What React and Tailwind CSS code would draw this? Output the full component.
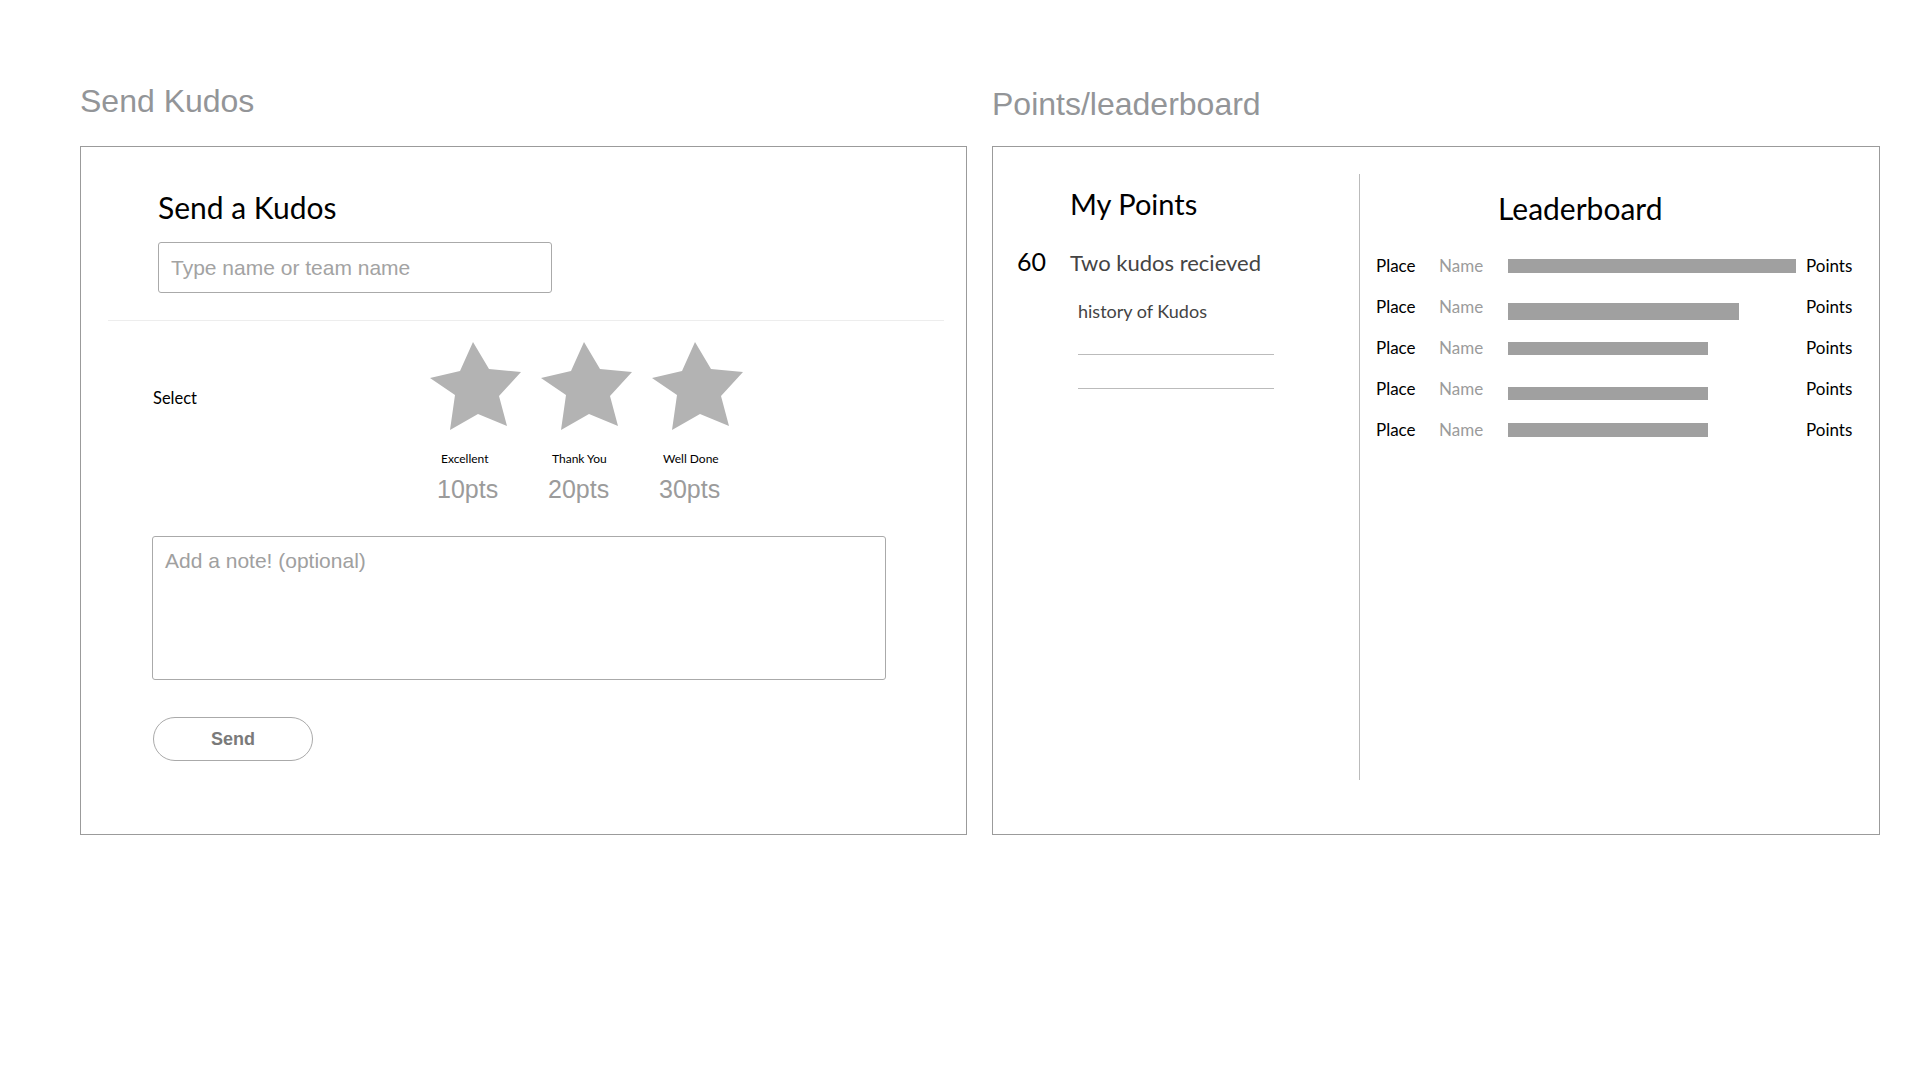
import React from 'react';

const sans = "font-['Liberation_Sans',Arial,sans-serif]";
const lato = "font-['Lato','Open_Sans',sans-serif]";

const kudos = [
  { label: 'Excellent', pts: '10pts' },
  { label: 'Thank You', pts: '20pts' },
  { label: 'Well Done', pts: '30pts' },
];

// width in px, plus a little vertical nudge the mockup has on some bars
const rows = [
  { w: 288, cls: 'h-[14px]' },
  { w: 231, cls: 'h-[17px] mt-[10px]' },
  { w: 200, cls: 'h-[13px] mt-[2px]' },
  { w: 200, cls: 'h-[13px] mt-[10px]' },
  { w: 200, cls: 'h-[14px]' },
];

function Star() {
  return (
    <svg width="91" height="88" viewBox="0 0 91 88">
      <polygon
        points="43,0 59,27 91,30 69,54 77,84 48,72 20,88 25,53 0,36 30,29"
        fill="#b3b3b3"
      />
    </svg>
  );
}

function SendKudos() {
  return (
    <div className="w-[887px] pt-[81px]">
      <h1 className={`${sans} h-[40px] leading-[40px] text-[32px] text-[#939598]`}>Send Kudos</h1>
      <div className="mt-[25px] h-[689px] border border-[#9b9b9b] flex flex-col">
        <div className="pl-[77px] pt-[42px]">
          <h2 className={`${lato} text-[30px] leading-[36px] text-black`}>Send a Kudos</h2>
          <input
            type="text"
            placeholder="Type name or team name"
            className={`${sans} mt-[17px] w-[394px] h-[51px] border border-[#aaaaaa] rounded-[3px] px-[12px] text-[21px] text-gray-700 placeholder:text-[#a3a3a3] outline-none`}
          />
        </div>

        <div className="mt-[27px] ml-[27px] mr-[22px] h-px bg-[#ededed]" />

        <div className="mt-[21px] pl-[72px] flex">
          <div className={`${lato} w-[277px] mt-[46px] text-[16.5px] leading-[20px] text-black`}>Select</div>
          {kudos.map((k) => (
            <div key={k.label} className="w-[111px] flex flex-col items-start">
              <Star />
              <span className={`${lato} mt-[21px] pl-[11px] text-[12px] leading-[16px] text-black`}>{k.label}</span>
              <span className={`${sans} mt-[8px] pl-[7px] text-[25px] leading-[28px] text-[#9b9b9b]`}>{k.pts}</span>
            </div>
          ))}
        </div>

        <textarea
          placeholder="Add a note! (optional)"
          className={`${sans} mt-[33px] ml-[71px] w-[734px] h-[144px] resize-none border border-[#aaaaaa] rounded-[3px] px-[12px] pt-[12px] text-[21px] leading-[24px] text-gray-700 placeholder:text-[#a0a0a0] outline-none`}
        />

        <button
          className={`${sans} mt-[37px] ml-[72px] w-[160px] h-[44px] rounded-full border border-[#aaaaaa] text-[18px] font-bold text-[#7a7a7a]`}
        >
          Send
        </button>
      </div>
    </div>
  );
}

function Leaderboard() {
  return (
    <div className="w-[888px] pt-[84px]">
      <h1 className={`${sans} h-[40px] leading-[40px] text-[32px] text-[#939598]`}>Points/leaderboard</h1>
      <div className="mt-[22px] h-[689px] border border-[#9b9b9b] flex">
        <div className="w-[366px] pl-[24px] pt-[39px] flex flex-col">
          <h2 className={`${lato} ml-[53px] text-[29px] leading-[36px] text-black`}>My Points</h2>
          <div className={`${lato} mt-[24px] h-[30px] flex items-baseline`}>
            <span className="w-[53px] text-[25px] leading-[30px] text-black">60</span>
            <span className="text-[22px] leading-[30px] text-[#444444]">Two kudos recieved</span>
          </div>
          <div className={`${lato} mt-[24px] ml-[61px] text-[18px] leading-[22px] text-[#444444]`}>history of Kudos</div>
          <div className="mt-[32px] ml-[61px] w-[196px] h-px bg-[#bbbbbb]" />
          <div className="mt-[33px] ml-[61px] w-[196px] h-px bg-[#bbbbbb]" />
        </div>

        <div className="mt-[27px] w-px h-[606px] bg-[#bbbbbb]" />

        <div className="flex-1 pl-[16px] pt-[43px] flex flex-col">
          <h2 className={`${lato} ml-[122px] text-[30px] leading-[36px] text-black`}>Leaderboard</h2>
          <div className="mt-[19px] flex flex-col">
            {rows.map((r, i) => (
              <div key={i} className={`${lato} h-[41px] flex items-center text-[17px]`}>
                <span className="w-[63px] text-black">Place</span>
                <span className="w-[69px] text-[#9b9b9b]">Name</span>
                <div className="w-[298px] flex items-center">
                  <div className={`${r.cls} bg-[#a0a0a0]`} style={{ width: r.w }} />
                </div>
                <span className="text-black">Points</span>
              </div>
            ))}
          </div>
        </div>
      </div>
    </div>
  );
}

export default function App() {
  return (
    <div className="w-[1920px] h-[1080px] bg-white flex gap-[25px] pl-[80px]">
      <SendKudos />
      <Leaderboard />
    </div>
  );
}
